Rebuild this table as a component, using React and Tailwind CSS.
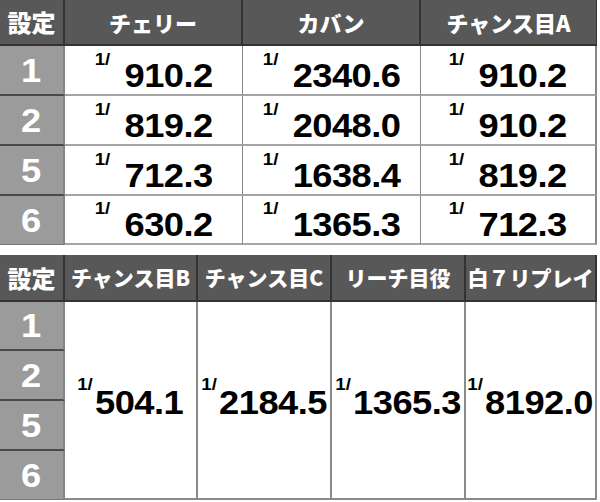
import React from "react";

const jp = { fontFamily: '"Noto Sans CJK JP", "Noto Sans", sans-serif' };
const num = { fontFamily: '"Liberation Sans", Arial, sans-serif' };

function Val({ v }) {
  return (
    <div className="flex items-start scale-x-[1.1]" style={num}>
      <span className="text-[17px] font-bold leading-none mr-[13px] -mt-[8px]">1/</span>
      <span className="text-[33px] font-bold leading-none tracking-[-0.5px]">{v}</span>
    </div>
  );
}

function Val2({ v }) {
  return (
    <div className="flex items-start scale-x-[1.1]" style={num}>
      <span className="text-[17px] font-bold leading-none mr-[2px] -mt-[10px]">1/</span>
      <span className="text-[33px] font-bold leading-none tracking-[-0.5px]">{v}</span>
    </div>
  );
}

const t1 = [
  ["1", "910.2", "2340.6", "910.2"],
  ["2", "819.2", "2048.0", "910.2"],
  ["5", "712.3", "1638.4", "819.2"],
  ["6", "630.2", "1365.3", "712.3"],
];

export default function App() {
  return (
    <div className="w-[600px] h-[502px] bg-white overflow-hidden text-black">
      <div className="grid grid-cols-[65px_178px_178px_176px] grid-rows-[46px_50px_50px_50px_49px] w-[597px]">
        {["設定", "チェリー", "カバン", "チャンス目A"].map((h, i) => (
          <div
            key={h}
            style={jp}
            className={`bg-[#585858] text-white font-black flex items-center justify-center border-b-2 border-[#333] ${i < 3 ? "border-r-2" : "border-r"} ${i === 0 ? "text-[24px]" : "text-[22px]"} leading-none`}
          >
            {h}
          </div>
        ))}
        {t1.map((r, ri) => (
          <React.Fragment key={ri}>
            <div
              style={num}
              className={`bg-[#9b9b9b] text-white font-bold text-[33px] leading-none flex items-center justify-center border-r-2 border-[#858585] ${ri < 3 ? "border-b-2 border-b-[#4a4a4a]" : "border-b border-b-[#777]"}`}
            >
              <span className="scale-x-[1.1] inline-block">{r[0]}</span>
            </div>
            {r.slice(1).map((v, ci) => (
              <div
                key={ci}
                className={`bg-white flex items-center justify-center pt-[10px] border-b-2 border-[#a5a5a5] ${ci < 2 ? "border-r" : "border-r-2"} border-r-[#888]`}
              >
                <Val v={v} />
              </div>
            ))}
          </React.Fragment>
        ))}
      </div>

      <div className="mt-[10px] grid grid-cols-[65px_133px_134px_134px_131px] grid-rows-[47px_49px_50px_50px_49px] w-[597px]">
        {["設定", "チャンス目B", "チャンス目C", "リーチ目役", "白７リプレイ"].map((h, i) => (
          <div
            key={h}
            style={jp}
            className={`bg-[#585858] text-white font-black flex items-center justify-center border-b-2 border-[#333] border-r-2 ${i === 0 ? "text-[24px]" : "text-[21px]"} leading-none whitespace-nowrap`}
          >
            {h}
          </div>
        ))}
        {["1", "2", "5", "6"].map((s, ri) => (
          <div
            key={s}
            style={{ ...num, gridColumn: 1, gridRow: ri + 2 }}
            className={`bg-[#9b9b9b] text-white font-bold text-[33px] leading-none flex items-center justify-center border-r-2 border-[#858585] ${ri < 3 ? "border-b-2 border-b-[#4a4a4a]" : "border-b border-b-[#777]"}`}
          >
            <span className="scale-x-[1.1] inline-block">{s}</span>
          </div>
        ))}
        {["504.1", "2184.5", "1365.3", "8192.0"].map((v, ci) => (
          <div
            key={v}
            style={{ gridColumn: ci + 2, gridRow: "2 / span 4" }}
            className="bg-white flex items-center justify-center border-r-2 border-b-2 border-[#8a8a8a] pt-[4px]"
          >
            <Val2 v={v} />
          </div>
        ))}
      </div>
    </div>
  );
}
